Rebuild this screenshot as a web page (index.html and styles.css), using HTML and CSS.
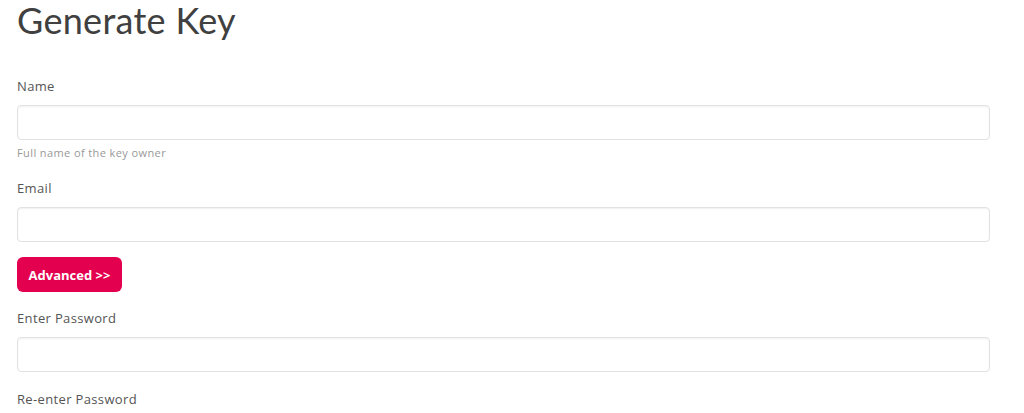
FILE: index.html
```html
<!DOCTYPE html>
<html lang="en">
<head>
<meta charset="utf-8">
<title>Generate Key</title>
<link rel="stylesheet" href="styles.css">
</head>
<body>
<main class="page">
  <h1 class="title">Generate Key</h1>
  <form class="form">
    <div class="field">
      <label class="label" for="name">Name</label>
      <input class="input" id="name" type="text">
      <div class="help">Full name of the key owner</div>
    </div>
    <div class="field">
      <label class="label" for="email">Email</label>
      <input class="input" id="email" type="email">
    </div>
    <button class="btn" type="button">Advanced &gt;&gt;</button>
    <div class="field">
      <label class="label" for="pw">Enter Password</label>
      <input class="input" id="pw" type="password">
    </div>
    <div class="field">
      <label class="label" for="pw2">Re-enter Password</label>
      <input class="input" id="pw2" type="password">
    </div>
  </form>
</main>
</body>
</html>
```

FILE: styles.css
```css
html, body {
  margin: 0;
  padding: 0;
  background: #fff;
}
body {
  font-family: "Open Sans", Lato, "Liberation Sans", sans-serif;
  color: #555;
}
.page {
  width: 973px;
  margin-left: 17px;
}
.title {
  margin: 0 0 35px 0;
  font-family: Lato, "Open Sans", sans-serif;
  font-size: 36px;
  line-height: 41px;
  font-weight: 400;
  color: #404040;
  letter-spacing: 0.3px;
}
.form {
  display: flex;
  flex-direction: column;
  align-items: flex-start;
}
.field {
  width: 100%;
  margin-bottom: 17px;
}
.label {
  display: block;
  font-size: 13px;
  line-height: 20px;
  margin-bottom: 9px;
  color: #555;
  letter-spacing: 0.35px;
}
.input {
  display: block;
  box-sizing: border-box;
  width: 100%;
  height: 35px;
  margin: 0;
  border: 1px solid #e2e2e2;
  border-radius: 4px;
  box-shadow: inset 0 1px 2px rgba(0,0,0,0.06);
  background: #fff;
  font: inherit;
}
.help {
  margin-top: 5px;
  font-size: 11px;
  line-height: 16px;
  color: #999;
  letter-spacing: 0.4px;
}
.btn {
  box-sizing: border-box;
  width: 105px;
  height: 35px;
  margin: -2px 0 16px 0;
  padding: 0;
  border: none;
  border-radius: 6px;
  background: #e3004f;
  color: #fff;
  font-family: inherit;
  font-size: 13px;
  font-weight: 700;
  cursor: pointer;
}
```
